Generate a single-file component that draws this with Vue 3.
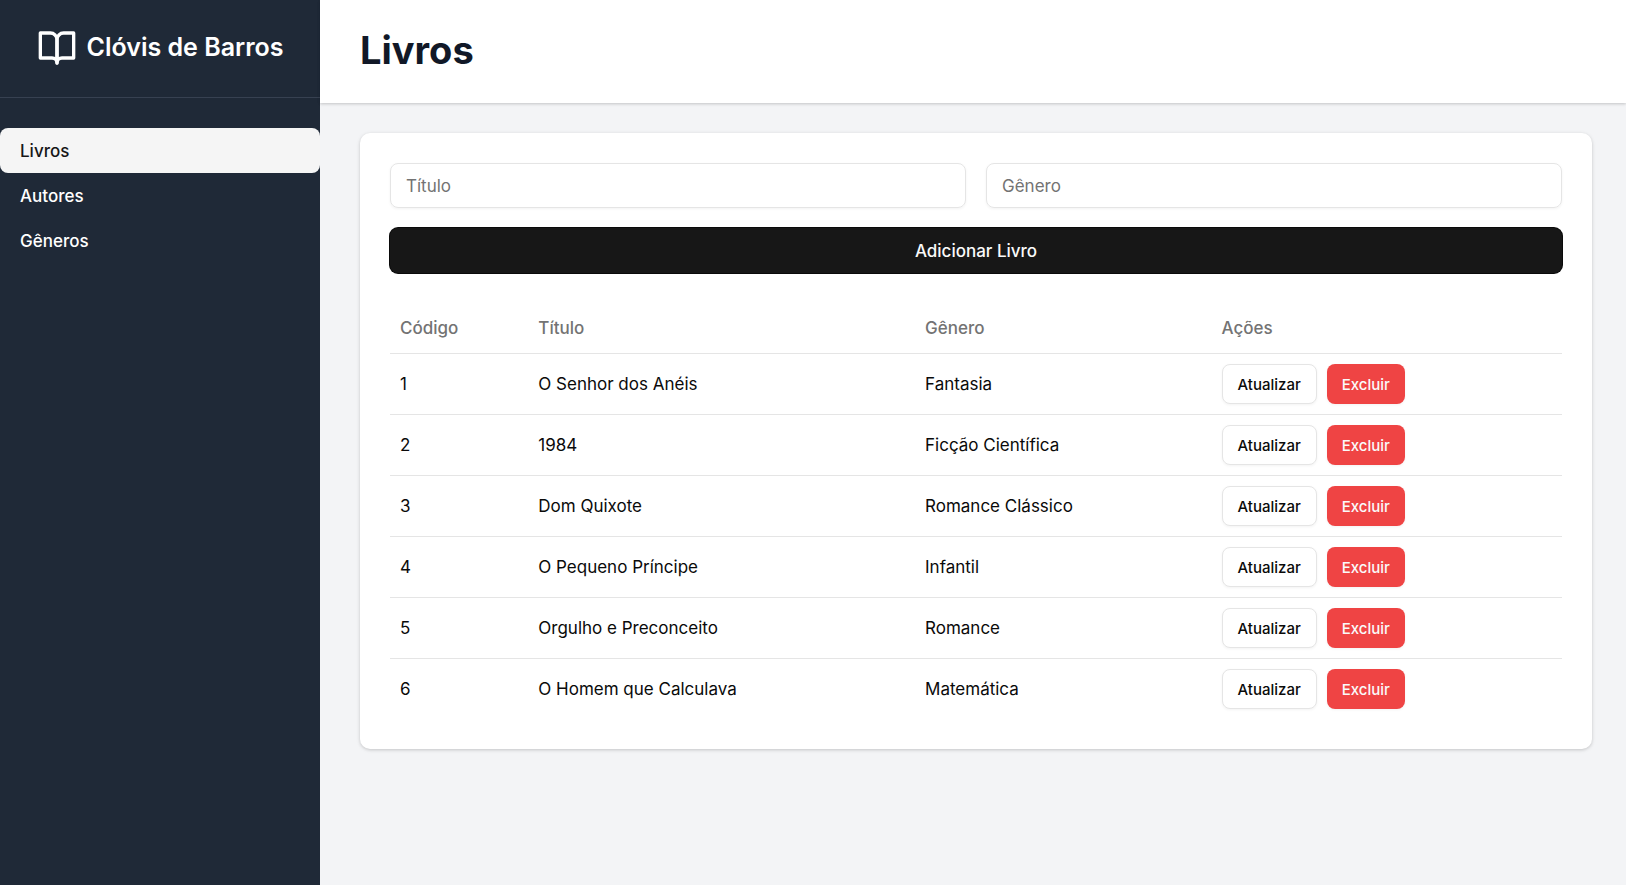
<script setup>
import { ref } from 'vue'

const links = ['Livros', 'Autores', 'Gêneros']
const current = ref('Livros')

const title = ref('')
const genre = ref('')
const books = ref([
  { id: 1, title: 'O Senhor dos Anéis', genre: 'Fantasia' },
  { id: 2, title: '1984', genre: 'Ficção Científica' },
  { id: 3, title: 'Dom Quixote', genre: 'Romance Clássico' },
  { id: 4, title: 'O Pequeno Príncipe', genre: 'Infantil' },
  { id: 5, title: 'Orgulho e Preconceito', genre: 'Romance' },
  { id: 6, title: 'O Homem que Calculava', genre: 'Matemática' },
])

function addBook() {
  if (!title.value || !genre.value) return
  const id = Math.max(0, ...books.value.map((b) => b.id)) + 1
  books.value.push({ id, title: title.value, genre: genre.value })
  title.value = ''
  genre.value = ''
}

function removeBook(id) {
  books.value = books.value.filter((b) => b.id !== id)
}
</script>

<template>
  <div class="layout">
    <aside class="sidebar">
      <div class="brand">
        <svg class="brand-icon" viewBox="0 0 24 24" aria-hidden="true">
          <path d="M2 3h6a4 4 0 0 1 4 4v14a3 3 0 0 0-3-3H2z" />
          <path d="M22 3h-6a4 4 0 0 0-4 4v14a3 3 0 0 1 3-3h7z" />
        </svg>
        <span>Clóvis de Barros</span>
      </div>
      <nav class="nav">
        <a
          v-for="link in links"
          :key="link"
          href="#"
          class="nav-link"
          :class="{ active: link === current }"
          @click.prevent="current = link"
        >{{ link }}</a>
      </nav>
    </aside>

    <div class="content">
      <header class="header">
        <h1>Livros</h1>
      </header>
      <main class="main">
        <section class="card">
          <form class="form" @submit.prevent="addBook">
            <input v-model="title" type="text" placeholder="Título" aria-label="Título" />
            <input v-model="genre" type="text" placeholder="Gênero" aria-label="Gênero" />
            <button type="submit" class="submit">Adicionar Livro</button>
          </form>
          <table class="table">
            <thead>
              <tr>
                <th class="col-id">Código</th>
                <th class="col-title">Título</th>
                <th class="col-genre">Gênero</th>
                <th>Ações</th>
              </tr>
            </thead>
            <tbody>
              <tr v-for="book in books" :key="book.id">
                <td>{{ book.id }}</td>
                <td>{{ book.title }}</td>
                <td>{{ book.genre }}</td>
                <td>
                  <div class="actions">
                    <button type="button" class="btn outline">Atualizar</button>
                    <button type="button" class="btn danger" @click="removeBook(book.id)">Excluir</button>
                  </div>
                </td>
              </tr>
            </tbody>
          </table>
        </section>
      </main>
    </div>
  </div>
</template>

<style>
body {
  margin: 0;
  background: #f3f4f6;
}
</style>

<style scoped>
.layout,
.layout * {
  box-sizing: border-box;
}

.layout {
  display: flex;
  min-height: 100vh;
  background: #f3f4f6;
  color: #0a0a0a;
  font-family: Inter, sans-serif;
  font-size: 17px;
  line-height: 25px;
}

.sidebar {
  flex: 0 0 320px;
  background: #1f2937;
  color: #fff;
}

.brand {
  display: flex;
  align-items: flex-start;
  justify-content: center;
  gap: 10px;
  padding: 28px 20px 29px;
  border-bottom: 1px solid #374151;
  font-size: 25px;
  font-weight: 600;
  line-height: 38px;
}

.brand-icon {
  width: 40px;
  height: 40px;
  fill: none;
  stroke: currentColor;
  stroke-width: 2;
  stroke-linecap: round;
  stroke-linejoin: round;
}

.nav {
  display: flex;
  flex-direction: column;
  margin-top: 30px;
}

.nav-link {
  padding: 11px 20px 9px;
  border-radius: 8px;
  color: #fff;
  font-weight: 500;
  text-decoration: none;
}

.nav-link.active {
  background: #f5f5f5;
  color: #171717;
}

.content {
  flex: 1;
  min-width: 0;
}

.header {
  padding: 28px 40px 30px;
  background: #fff;
  box-shadow: 0 1px 3px rgba(0, 0, 0, 0.1), 0 1px 3px rgba(0, 0, 0, 0.1);
}

h1 {
  margin: 0;
  color: #111827;
  font-size: 38px;
  font-weight: 700;
  line-height: 45px;
}

.main {
  padding: 30px 34px 30px 40px;
}

.card {
  padding: 30px;
  border-radius: 10px;
  background: #fff;
  box-shadow: 0 1px 4px rgba(0, 0, 0, 0.1), 0 1px 3px rgba(0, 0, 0, 0.1);
}

.form {
  display: grid;
  grid-template-columns: 1fr 1fr;
  gap: 20px;
  margin-bottom: 30px;
}

input {
  width: 100%;
  height: 45px;
  padding: 0 15px;
  border: 1px solid #e5e5e5;
  border-radius: 8px;
  background: transparent;
  box-shadow: 0 1px 3px rgba(0, 0, 0, 0.05);
  color: inherit;
  font: inherit;
}

input::placeholder {
  color: #737373;
  opacity: 1;
}

button {
  border: 0;
  border-radius: 8px;
  font-family: inherit;
  font-weight: 500;
  cursor: pointer;
}

.submit {
  grid-column: 1 / -1;
  height: 45px;
  background: #171717;
  box-shadow: 0 0 0 1px #0a0a0a;
  color: #fafafa;
  font-size: 17px;
}

.table {
  width: 100%;
  border-collapse: separate;
  border-spacing: 0;
  table-layout: fixed;
}

th {
  height: 51px;
  padding: 0 10px;
  border-bottom: 1px solid #e5e5e5;
  color: #737373;
  font-weight: 500;
  text-align: left;
}

.col-id {
  width: 11.8%;
}

.col-title {
  width: 33%;
}

.col-genre {
  width: 25.3%;
}

td {
  padding: 10px;
  border-bottom: 1px solid #e5e5e5;
}

tbody tr:last-child td {
  border-bottom: 0;
}

.actions {
  display: flex;
  gap: 10px;
}

.btn {
  height: 40px;
  padding: 0 15px;
  font-size: 15px;
}

.outline {
  border: 1px solid #e5e5e5;
  background: #fff;
  box-shadow: 0 1px 3px rgba(0, 0, 0, 0.05);
  color: #0a0a0a;
}

.danger {
  background: #ef4444;
  box-shadow: 0 1px 3px rgba(0, 0, 0, 0.05);
  color: #fafafa;
}
</style>
